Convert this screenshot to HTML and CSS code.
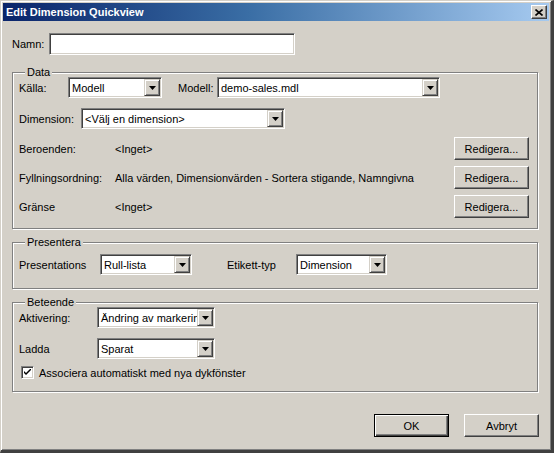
FILE: index.html
```html
<!DOCTYPE html>
<html>
<head>
<meta charset="utf-8">
<link rel="stylesheet" href="styles.css">
</head>
<body>
<div class="window">
  <div class="titlebar">
    <span class="title">Edit Dimension Quickview</span>
    <span class="close-btn"><svg width="8" height="7" viewBox="0 0 8 7"><path d="M0.5 0.5 L7.5 6.5 M7.5 0.5 L0.5 6.5" stroke="#000" stroke-width="1.6" fill="none"/></svg></span>
  </div>
  <div class="client">
    <div class="row name-row">
      <span class="lbl lbl-namn">Namn:</span>
      <div class="textbox"></div>
    </div>

    <fieldset class="group group-data">
      <legend>Data</legend>
      <div class="row first-row">
        <span class="lbl lbl-kalla">Källa:</span>
        <div class="combo combo-kalla"><span class="combo-text">Modell</span><span class="combo-btn"><svg width="7" height="4" viewBox="0 0 7 4"><polygon points="0,0 7,0 3.5,4" fill="#000"/></svg></span></div>
        <span class="lbl lbl-modell">Modell:</span>
        <div class="combo combo-modell"><span class="combo-text">demo-sales.mdl</span><span class="combo-btn"><svg width="7" height="4" viewBox="0 0 7 4"><polygon points="0,0 7,0 3.5,4" fill="#000"/></svg></span></div>
      </div>
      <div class="row dim-row">
        <span class="lbl lbl-dim">Dimension:</span>
        <div class="combo combo-dim"><span class="combo-text">&lt;Välj en dimension&gt;</span><span class="combo-btn"><svg width="7" height="4" viewBox="0 0 7 4"><polygon points="0,0 7,0 3.5,4" fill="#000"/></svg></span></div>
      </div>
      <div class="prop-grid">
        <span class="lbl">Beroenden:</span>
        <span class="val">&lt;Inget&gt;</span>
        <button class="btn">Redigera...</button>
        <span class="lbl">Fyllningsordning:</span>
        <span class="val">Alla värden, Dimensionvärden - Sortera stigande, Namngivna</span>
        <button class="btn">Redigera...</button>
        <span class="lbl">Gränse</span>
        <span class="val">&lt;Inget&gt;</span>
        <button class="btn">Redigera...</button>
      </div>
    </fieldset>

    <fieldset class="group group-pres">
      <legend>Presentera</legend>
      <div class="row pres-row">
        <span class="lbl lbl-pres">Presentations</span>
        <div class="combo combo-pres"><span class="combo-text">Rull-lista</span><span class="combo-btn"><svg width="7" height="4" viewBox="0 0 7 4"><polygon points="0,0 7,0 3.5,4" fill="#000"/></svg></span></div>
        <span class="lbl lbl-etikett">Etikett-typ</span>
        <div class="combo combo-etikett"><span class="combo-text">Dimension</span><span class="combo-btn"><svg width="7" height="4" viewBox="0 0 7 4"><polygon points="0,0 7,0 3.5,4" fill="#000"/></svg></span></div>
      </div>
    </fieldset>

    <fieldset class="group group-bet">
      <legend>Beteende</legend>
      <div class="row first-row">
        <span class="lbl lbl-bet">Aktivering:</span>
        <div class="combo combo-bet"><span class="combo-text">Ändring av markering</span><span class="combo-btn"><svg width="7" height="4" viewBox="0 0 7 4"><polygon points="0,0 7,0 3.5,4" fill="#000"/></svg></span></div>
      </div>
      <div class="row ladda-row">
        <span class="lbl lbl-bet">Ladda</span>
        <div class="combo combo-bet"><span class="combo-text">Sparat</span><span class="combo-btn"><svg width="7" height="4" viewBox="0 0 7 4"><polygon points="0,0 7,0 3.5,4" fill="#000"/></svg></span></div>
      </div>
      <div class="row check-row">
        <span class="checkbox"><svg width="7" height="7" viewBox="0 0 7 7"><path d="M0 2 L0 4 L2 6 L7 1 L7 -1 L2 4 Z" fill="#000"/></svg></span>
        <span class="lbl">Associera automatiskt med nya dykfönster</span>
      </div>
    </fieldset>

    <div class="footer">
      <button class="btn btn-default">OK</button>
      <button class="btn">Avbryt</button>
    </div>
  </div>
</div>
</body>
</html>
```

FILE: styles.css
```css
html, body {
  margin: 0;
  padding: 0;
  background: #d4d0c8;
}
body {
  font-family: "Liberation Sans", Arial, sans-serif;
  font-size: 11px;
  color: #000;
}
.window {
  width: 554px;
  height: 453px;
  box-sizing: border-box;
  border-style: solid;
  border-width: 1px 3px 3px 1px;
  border-color: #d4d0c8 #404040 #404040 #d4d0c8;
  padding: 2px;
  background: #d4d0c8;
  box-shadow: inset 1px 1px 0 #fff, inset -1px -1px 0 #808080;
  display: flex;
  flex-direction: column;
}
.titlebar {
  height: 18px;
  flex: none;
  background: linear-gradient(to right, #0a246a 0%, #3a6ea5 45%, #a6caf0 100%);
  display: flex;
  align-items: center;
  justify-content: space-between;
  padding: 0 2px 0 3px;
}
.title {
  color: #fff;
  font-weight: bold;
  font-size: 11px;
  letter-spacing: 0;
}
.close-btn {
  width: 16px;
  height: 14px;
  box-sizing: border-box;
  background: #d4d0c8;
  border: 1px solid;
  border-color: #fff #404040 #404040 #fff;
  box-shadow: inset -1px -1px 0 #808080;
  display: flex;
  align-items: center;
  justify-content: center;
}
.client {
  flex: 1;
  padding: 12px 11px 0 9px;
  display: flex;
  flex-direction: column;
}
.row {
  display: flex;
  align-items: center;
}
.lbl, .val {
  white-space: nowrap;
}
.lbl-namn { width: 37px; }
.textbox {
  width: 246px;
  height: 22px;
  box-sizing: border-box;
  background: #fff;
  border: 1px solid;
  border-color: #808080 #fff #fff #808080;
  box-shadow: inset 1px 1px 0 #404040, inset -1px -1px 0 #d4d0c8;
}
.group {
  margin: 0;
  min-width: 0;
  padding: 0 8px 0 6px;
  border: 1px solid #808080;
  box-shadow: inset 1px 1px 0 #fff, 1px 1px 0 #fff;
}
.group legend {
  margin-left: 6px;
  padding: 0 2px;
  line-height: 9px;
  background: #d4d0c8;
}
.group-data {
  margin-top: 13px;
  padding-bottom: 10px;
}
.group-pres {
  margin-top: 9px;
  padding-bottom: 13px;
}
.group-bet {
  margin-top: 9px;
  padding-bottom: 12px;
}
.combo {
  height: 21px;
  box-sizing: border-box;
  background: #fff;
  border: 1px solid;
  border-color: #808080 #fff #fff #808080;
  box-shadow: inset 1px 1px 0 #404040, inset -1px -1px 0 #d4d0c8;
  padding: 2px 2px 2px 2px;
  display: flex;
  align-items: center;
}
.combo-text {
  flex: 1;
  overflow: hidden;
  white-space: nowrap;
  padding-left: 1px;
}
.combo-btn {
  flex: none;
  width: 16px;
  height: 17px;
  margin: -1px -1px -1px 0;
  box-sizing: border-box;
  background: #d4d0c8;
  border: 1px solid;
  border-color: #d4d0c8 #404040 #404040 #d4d0c8;
  box-shadow: inset 1px 1px 0 #fff, inset -1px -1px 0 #808080;
  display: flex;
  align-items: center;
  justify-content: center;
}
.lbl-kalla { width: 49px; }
.combo-kalla { width: 94px; }
.lbl-modell { width: 39px; margin-left: 16px; }
.combo-modell { width: 223px; }
.dim-row { margin-top: 10px; }
.lbl-dim { width: 62px; }
.combo-dim { width: 204px; }
.prop-grid {
  margin-top: 8px;
  display: grid;
  grid-template-columns: 96px 1fr 75px;
  grid-auto-rows: 23px;
  row-gap: 6px;
  align-items: center;
}
.btn {
  width: 75px;
  height: 23px;
  box-sizing: border-box;
  font-family: "Liberation Sans", Arial, sans-serif;
  font-size: 11px;
  color: #000;
  background: #d4d0c8;
  border: 1px solid;
  border-color: #fff #404040 #404040 #fff;
  box-shadow: inset -1px -1px 0 #808080, inset 1px 1px 0 #d4d0c8;
  padding: 0;
  margin: 0;
}
.pres-row { margin-top: 7px; }
.lbl-pres { width: 81px; }
.combo-pres { width: 92px; }
.lbl-etikett { width: 69px; margin-left: 35px; }
.combo-etikett { width: 91px; }
.lbl-bet { width: 78px; }
.combo-bet { width: 118px; }
.ladda-row { margin-top: 10px; }
.check-row { margin-top: 7px; padding-left: 2px; }
.checkbox {
  width: 13px;
  height: 13px;
  box-sizing: border-box;
  background: #fff;
  border: 1px solid;
  border-color: #808080 #fff #fff #808080;
  box-shadow: inset 1px 1px 0 #404040, inset -1px -1px 0 #d4d0c8;
  display: flex;
  align-items: center;
  justify-content: center;
  margin-right: 5px;
}
.footer {
  margin-top: 22px;
  margin-right: -1px;
  display: flex;
  justify-content: flex-end;
  gap: 15px;
}
.btn-default {
  border-color: #000;
  box-shadow: inset 1px 1px 0 #fff, inset -1px -1px 0 #404040, inset -2px -2px 0 #808080;
}
```
